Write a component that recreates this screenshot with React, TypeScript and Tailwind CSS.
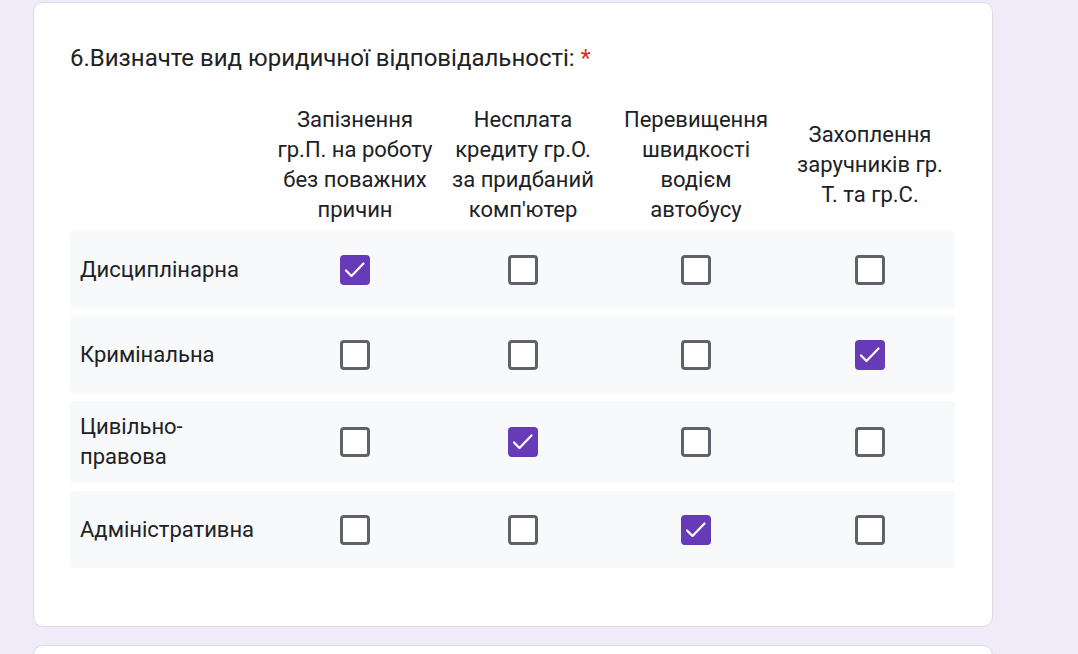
import { Fragment } from 'react';

const columns = [
  ['Запізнення', 'гр.П. на роботу', 'без поважних', 'причин'],
  ['Несплата', 'кредиту гр.О.', 'за придбаний', "комп'ютер"],
  ['Перевищення', 'швидкості', 'водієм', 'автобусу'],
  ['Захоплення', 'заручників гр.', 'Т. та гр.С.'],
];

const rows = [
  { label: ['Дисциплінарна'], checked: 0 },
  { label: ['Кримінальна'], checked: 3 },
  { label: ['Цивільно-', 'правова'], checked: 1 },
  { label: ['Адміністративна'], checked: 2 },
];

function Checkbox({ checked }: { checked: boolean }) {
  if (checked) {
    return (
      <div className="h-[30px] w-[30px] rounded-[4px] bg-[#673ab7]">
        <svg width="30" height="30" viewBox="0 0 30 30" fill="none">
          <path d="M6 15.5l5.5 5.5L23.5 8.5" stroke="white" strokeWidth="2.2" strokeLinecap="round" strokeLinejoin="round" />
        </svg>
      </div>
    );
  }
  return <div className="h-[30px] w-[30px] rounded-[4px] border-[3px] border-[#5f6368] bg-white" />;
}

export default function App() {
  return (
    <div className="min-h-screen bg-[#f0ebf8] pl-[33px] pt-[2px] font-['Roboto',sans-serif] text-[#202124]">
      <div className="w-[960px] rounded-[10px] border border-[#dadce0] bg-white pb-[58px] pl-[36px] pt-[40px]">
        <h2 className="text-[24px] leading-[30px]">
          6.Визначте вид юридичної відповідальності: <span className="text-[#d93025]">*</span>
        </h2>

        <div className="mt-[32px] w-[885px]">
          <div className="grid grid-cols-[201px_168px_168px_178px_170px] items-center pb-[6px]">
            <div />
            {columns.map((lines, i) => (
              <div key={i} className="whitespace-nowrap text-center text-[22px] leading-[30px]">
                {lines.map((l) => (
                  <div key={l}>{l}</div>
                ))}
              </div>
            ))}
          </div>

          <div className="flex flex-col gap-[8px]">
            {rows.map((row, r) => (
              <div
                key={r}
                className="grid min-h-[77px] grid-cols-[201px_168px_168px_178px_170px] items-center rounded-[4px] bg-[#f8f9fa] py-[11px]"
              >
                <div className="pl-[10px] text-[22px] leading-[30px]">
                  {row.label.map((l, i) => (
                    <Fragment key={i}>
                      {i > 0 && <br />}
                      {l}
                    </Fragment>
                  ))}
                </div>
                {columns.map((_, c) => (
                  <div key={c} className="flex justify-center">
                    <Checkbox checked={row.checked === c} />
                  </div>
                ))}
              </div>
            ))}
          </div>
        </div>
      </div>

      <div className="mt-[18px] h-[40px] w-[960px] rounded-t-[10px] border border-[#dadce0] bg-white" />
    </div>
  );
}
